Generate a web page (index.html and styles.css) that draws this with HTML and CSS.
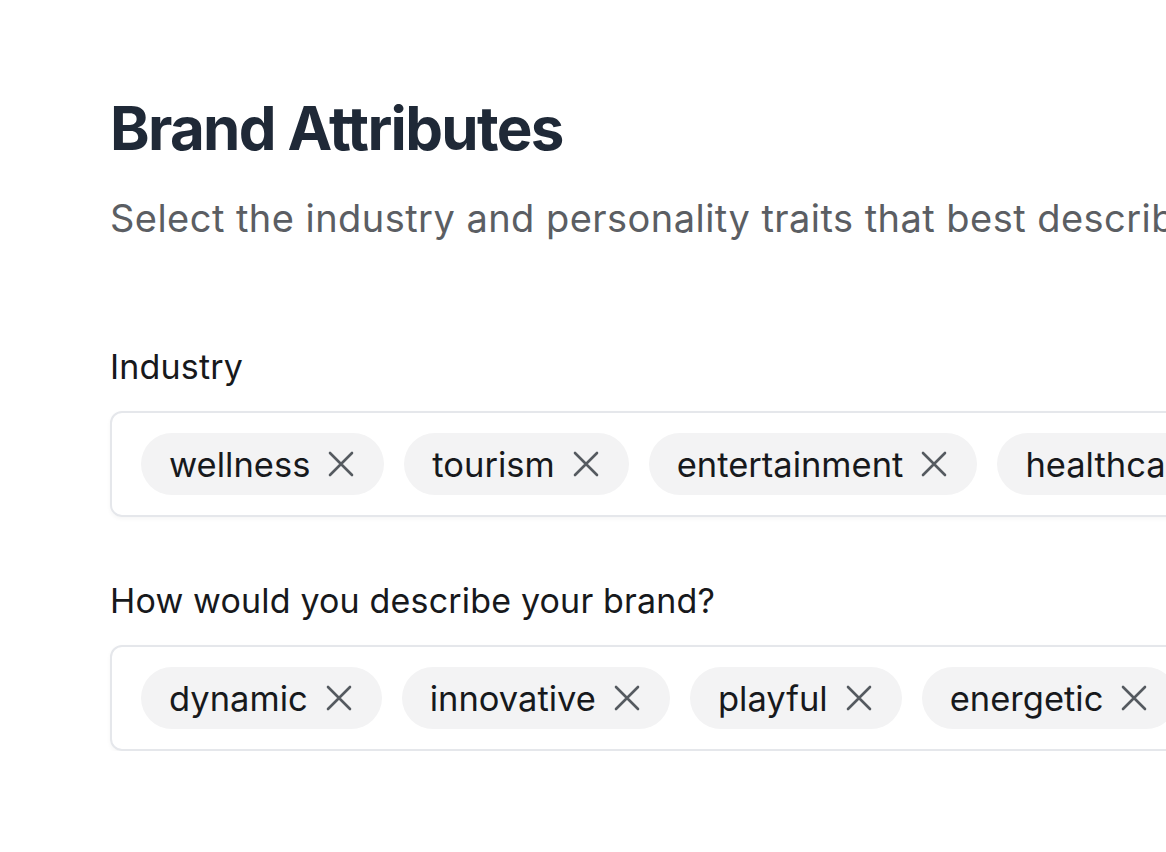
FILE: index.html
```html
<!DOCTYPE html>
<html lang="en">
<head>
<meta charset="utf-8">
<title>Brand Attributes</title>
<link rel="stylesheet" href="styles.css">
</head>
<body>
<main class="page">
  <h1 class="title">Brand Attributes</h1>
  <p class="subtitle">Select the industry and personality traits that best describe your brand.</p>

  <section class="field field-first">
    <label class="label">Industry</label>
    <div class="box">
      <span class="chip">wellness<svg class="x" viewBox="0 0 26 26"><path d="M2 2L24 24M24 2L2 24"/></svg></span>
      <span class="chip">tourism<svg class="x" viewBox="0 0 26 26"><path d="M2 2L24 24M24 2L2 24"/></svg></span>
      <span class="chip">entertainment<svg class="x" viewBox="0 0 26 26"><path d="M2 2L24 24M24 2L2 24"/></svg></span>
      <span class="chip">healthcare<svg class="x" viewBox="0 0 26 26"><path d="M2 2L24 24M24 2L2 24"/></svg></span>
    </div>
  </section>

  <section class="field">
    <label class="label">How would you describe your brand?</label>
    <div class="box">
      <span class="chip">dynamic<svg class="x" viewBox="0 0 26 26"><path d="M2 2L24 24M24 2L2 24"/></svg></span>
      <span class="chip">innovative<svg class="x" viewBox="0 0 26 26"><path d="M2 2L24 24M24 2L2 24"/></svg></span>
      <span class="chip">playful<svg class="x" viewBox="0 0 26 26"><path d="M2 2L24 24M24 2L2 24"/></svg></span>
      <span class="chip">energetic<svg class="x" viewBox="0 0 26 26"><path d="M2 2L24 24M24 2L2 24"/></svg></span>
    </div>
  </section>
</main>
</body>
</html>
```

FILE: styles.css
```css
html, body {
  margin: 0;
  padding: 0;
  background: #ffffff;
  overflow: hidden;
}
body {
  font-family: Inter, "Noto Sans", sans-serif;
  color: #1f2937;
}
.page {
  padding: 96px 0 0 110px;
  width: 1500px;
}
.title {
  margin: 0;
  font-size: 60px;
  line-height: 64px;
  font-weight: 700;
  letter-spacing: -0.028em;
  color: #1f2937;
}
.subtitle {
  margin: 34px 0 0;
  font-size: 38px;
  line-height: 48px;
  color: #5b5e63;
  white-space: nowrap;
  letter-spacing: 0.012em;
}
.field {
  margin-top: 62px;
}
.field-first {
  margin-top: 103px;
}
.label {
  display: block;
  font-size: 34px;
  line-height: 44px;
  color: #17191c;
  margin-bottom: 22px;
  letter-spacing: 0.005em;
}
.box {
  display: flex;
  gap: 20px;
  padding: 20px 29px;
  border: 2px solid #e5e7eb;
  border-radius: 12px;
  box-shadow: 0 2px 4px rgba(0,0,0,0.04);
  white-space: nowrap;
}
.chip {
  display: inline-flex;
  align-items: center;
  gap: 18px;
  height: 62px;
  padding: 0 30px 0 28px;
  border-radius: 31px;
  background: #f3f3f4;
  font-size: 34.5px;
  color: #17191c;
  flex-shrink: 0;
}
.x {
  width: 26px;
  height: 26px;
  fill: none;
  stroke: #555a60;
  stroke-width: 2.6;
  stroke-linecap: round;
}
```
